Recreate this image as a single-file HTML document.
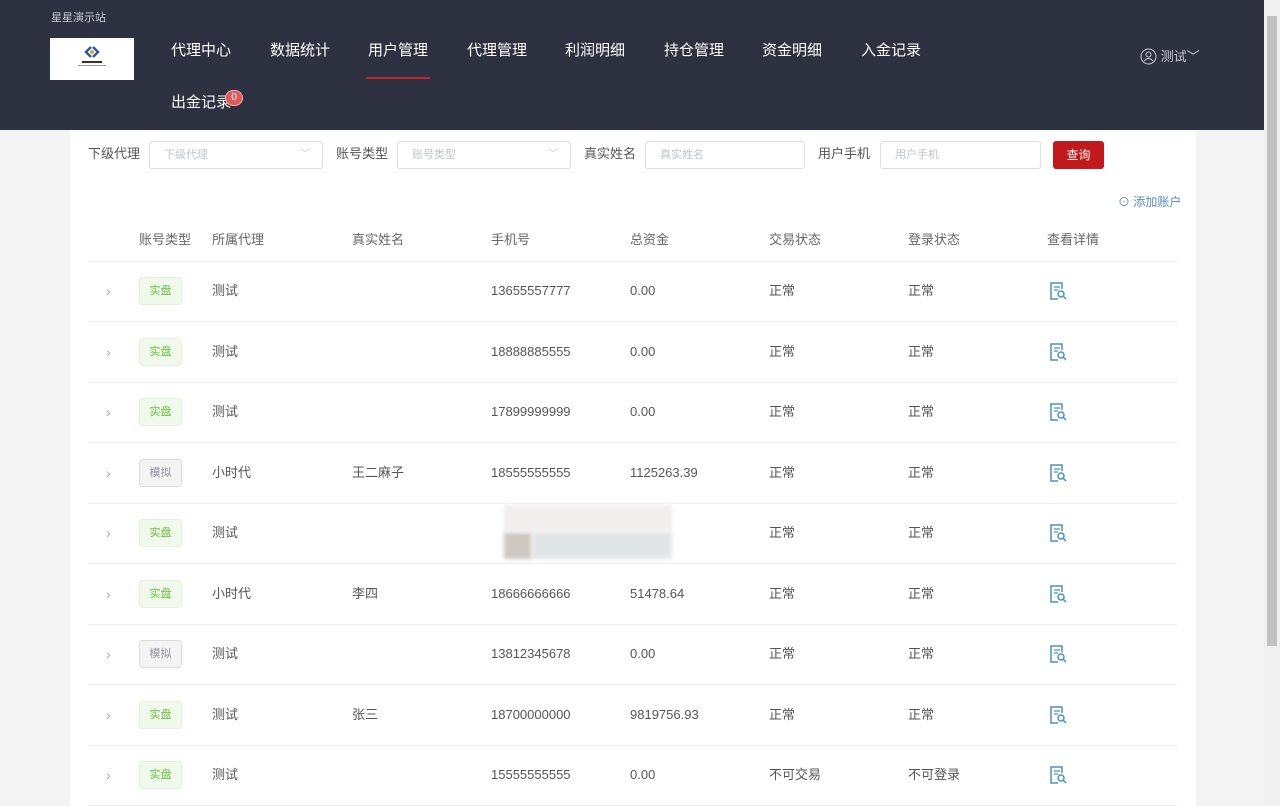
<!DOCTYPE html>
<html><head><meta charset="utf-8">
<style>
*{margin:0;padding:0;box-sizing:border-box}
body{width:1280px;height:806px;overflow:hidden;background:#f4f4f5;font-family:"Liberation Sans","Noto Sans CJK SC",sans-serif;position:relative;color:#555}
.hd{position:absolute;left:0;top:0;width:1264px;height:130px;background:#2e3240}
.site{position:absolute;left:51px;top:9px;font-size:11px;color:#c8cad0}
.logo{position:absolute;left:50px;top:38px;width:84px;height:42px;background:#fff}
.nav{position:absolute;font-size:15px;color:#fff;top:41px;line-height:20px}
.ul{position:absolute;left:366px;top:77px;width:64px;height:2px;background:#c0262b}
.badge{position:absolute;left:225px;top:90px;width:18px;height:16px;border-radius:8px;background:#e05a5a;border:1px solid #f0b0b0;color:#fff;font-size:10px;text-align:center;line-height:14px}
.user{position:absolute;left:1140px;top:46px;font-size:13px;color:#c8cad0}
.sb{position:absolute;left:1264px;top:0;width:16px;height:806px;background:#f0f0f0}
.sb i{position:absolute;left:3px;top:16px;width:10px;height:630px;background:#c1c1c1}
.card{position:absolute;left:70px;top:130px;width:1126px;height:676px;background:#fff}
.lbl{position:absolute;top:145px;font-size:13px;color:#555;line-height:18px}
.inp{position:absolute;top:141px;height:28px;border:1px solid #dcdfe6;border-radius:3px;font-size:11px;color:#c0c4cc;padding:0 14px;line-height:26px}
.inp .ar{position:absolute;right:12px;top:0;color:#c0c4cc;font-size:10px}
.btn{position:absolute;left:1053px;top:141px;width:51px;height:28px;background:#c2191c;border-radius:3px;color:#fff;font-size:12px;text-align:center;line-height:28px}
.add{position:absolute;left:1118px;top:194px;font-size:12px;color:#5a8bb8;line-height:16px}
.th{position:absolute;top:231px;font-size:13px;color:#666;line-height:18px}
.hl{position:absolute;left:88px;width:1089px;height:1px;background:#ebeef5}
.c{position:absolute;font-size:13px;color:#555;line-height:18px}
.tag{position:absolute;left:139px;width:43px;height:28px;border-radius:4px;font-size:11px;text-align:center;line-height:26px}
.real{background:#f0f9eb;border:1px solid #e1f3d8;color:#67c23a}
.sim{background:#f4f4f5;border:1px solid #dcdcdc;color:#909399}
.arr{position:absolute;left:106px;font-size:14px;color:#aaa;line-height:18px}
.blur{position:absolute;background:#e8e8e8;filter:blur(2px)}
</style></head><body>
<div class="hd">
<div class="site">星星演示站</div>
<div class="logo"><svg width="84" height="42"><path d="M41 9 l-5 5 5 5 M43 9 l5 5 -5 5" stroke="#2a5aa0" stroke-width="2.5" fill="none"/><circle cx="42" cy="14" r="2" fill="#e0a030"/><rect x="32" y="23" width="20" height="2" fill="#333"/><rect x="28" y="27" width="28" height="1" fill="#999"/></svg></div>
<div class="nav" style="left:171px">代理中心</div>
<div class="nav" style="left:270px">数据统计</div>
<div class="nav" style="left:368px">用户管理</div>
<div class="nav" style="left:467px">代理管理</div>
<div class="nav" style="left:565px">利润明细</div>
<div class="nav" style="left:664px">持仓管理</div>
<div class="nav" style="left:762px">资金明细</div>
<div class="nav" style="left:861px">入金记录</div>
<div class="nav" style="left:171px;top:93px">出金记录</div>
<div class="ul"></div>
<div class="badge">0</div>
<div class="user"><svg width="17" height="17" style="vertical-align:-4px"><circle cx="8.5" cy="8.5" r="7.5" stroke="#c8cad0" fill="none"/><circle cx="8.5" cy="6.5" r="2.5" stroke="#c8cad0" fill="none"/><path d="M4 13 q4.5-5 9 0" stroke="#c8cad0" fill="none"/></svg> 测试﹀</div>
</div>
<div class="sb"><i></i></div>
<div class="card"></div>
<div class="lbl" style="left:88px">下级代理</div>
<div class="inp" style="left:149px;width:174px">下级代理<span class="ar">﹀</span></div>
<div class="lbl" style="left:336px">账号类型</div>
<div class="inp" style="left:397px;width:174px">账号类型<span class="ar">﹀</span></div>
<div class="lbl" style="left:584px">真实姓名</div>
<div class="inp" style="left:645px;width:160px">真实姓名</div>
<div class="lbl" style="left:818px">用户手机</div>
<div class="inp" style="left:880px;width:161px">用户手机</div>
<div class="btn">查询</div>
<div class="add">⊙ 添加账户</div>
<div class="th" style="left:139px">账号类型</div>
<div class="th" style="left:212px">所属代理</div>
<div class="th" style="left:352px">真实姓名</div>
<div class="th" style="left:491px">手机号</div>
<div class="th" style="left:630px">总资金</div>
<div class="th" style="left:769px">交易状态</div>
<div class="th" style="left:908px">登录状态</div>
<div class="th" style="left:1047px">查看详情</div>
<div class="hl" style="top:261px"></div>
<div id="rows"></div>
<script>
var d=[["r","测试","","13655557777","0.00","正常","正常"],["r","测试","","18888885555","0.00","正常","正常"],["r","测试","","17899999999","0.00","正常","正常"],["s","小时代","王二麻子","18555555555","1125263.39","正常","正常"],["r","测试","","","","正常","正常"],["r","小时代","李四","18666666666","51478.64","正常","正常"],["s","测试","","13812345678","0.00","正常","正常"],["r","测试","张三","18700000000","9819756.93","正常","正常"],["r","测试","","15555555555","0.00","不可交易","不可登录"]];
var h="";d.forEach(function(r,i){var y=Math.round(291+i*60.5);
h+='<div class="arr" style="top:'+(y-9)+'px">›</div>';
h+='<div class="tag '+(r[0]=="r"?"real":"sim")+'" style="top:'+(y-14)+'px">'+(r[0]=="r"?"实盘":"模拟")+'</div>';
[212,352,491,630,769,908].forEach(function(x,k){h+='<div class="c" style="left:'+x+'px;top:'+(y-9)+'px">'+r[k+1]+'</div>'});
h+='<svg style="position:absolute;left:1049px;top:'+(y-10)+'px" width="18" height="20"><path d="M13 8V2H2v16h7" stroke="#4a90c8" stroke-width="1.5" fill="none"/><path d="M5 6h6M5 9h4" stroke="#4a90c8" stroke-width="1.3"/><circle cx="12" cy="13" r="3" stroke="#4a90c8" stroke-width="1.5" fill="none"/><path d="M14 15l3 3" stroke="#4a90c8" stroke-width="1.5"/></svg>';
h+='<div class="hl" style="top:'+(y+30)+'px"></div>';});
document.getElementById("rows").innerHTML=h;
</script>
<div class="blur" style="left:504px;top:532px;width:28px;height:27px;background:#cdc8c0"></div>
<div class="blur" style="left:532px;top:532px;width:140px;height:27px;background:#e2e5e6"></div>
<div class="blur" style="left:504px;top:505px;width:168px;height:27px;background:#f1efee"></div>
</body></html>
